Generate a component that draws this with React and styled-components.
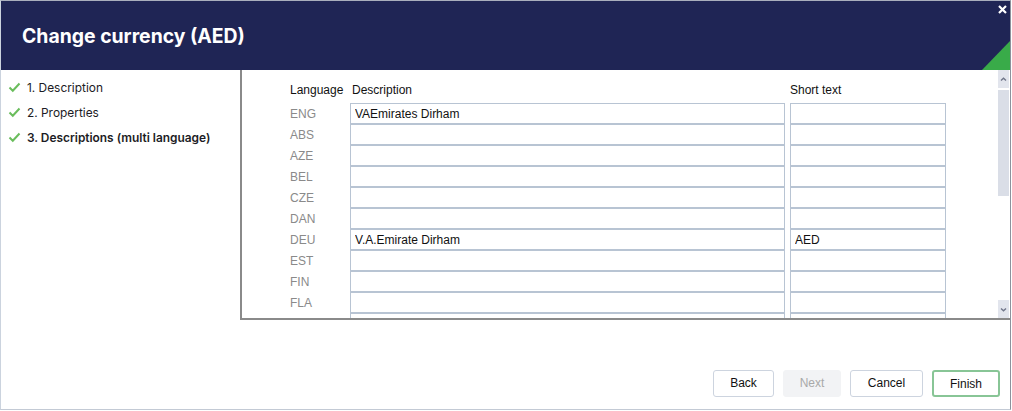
import React from 'react';
import styled, { createGlobalStyle } from 'styled-components';

const GlobalStyle = createGlobalStyle`
  html, body { margin: 0; padding: 0; background: #fff; }
  * { box-sizing: border-box; }
`;

const Window = styled.div`
  width: 1011px;
  height: 410px;
  display: flex;
  flex-direction: column;
  border-top: 1px solid #a9afbd;
  border-right: 1px solid #8c919c;
  border-left: 1px solid #cbd3de;
  border-bottom: 1px solid #c3cad5;
  background: #fff;
  font-family: "Liberation Sans", Arial, sans-serif;
`;

const Header = styled.div`
  position: relative;
  height: 69px;
  flex: none;
  display: flex;
  align-items: center;
  padding-left: 21px;
  background: #1f2555;
  overflow: hidden;
`;

const Title = styled.h1`
  margin: 0;
  color: #fff;
  font-family: Inter, "Noto Sans", sans-serif;
  font-size: 19.4px;
  font-weight: 700;
`;

const CloseButton = styled.button`
  position: absolute;
  top: 2px;
  right: 2px;
  width: 12px;
  height: 12px;
  padding: 0;
  border: none;
  background: transparent;
  display: flex;
  align-items: center;
  justify-content: center;
`;

const Corner = styled.div`
  position: absolute;
  right: 0;
  bottom: 0;
  width: 0;
  height: 0;
  border-left: 28px solid transparent;
  border-bottom: 29px solid #39ab49;
`;

const Body = styled.div`
  display: flex;
  height: 250px;
  flex: none;
`;

const Steps = styled.ul`
  width: 239px;
  flex: none;
  margin: 0;
  padding: 5px 0 0 7px;
  list-style: none;
`;

const Step = styled.li`
  display: flex;
  align-items: center;
  gap: 6px;
  height: 25px;
  font-family: Inter, "Noto Sans", sans-serif;
  font-size: 11.9px;
  font-weight: ${p => (p.$active ? 600 : 400)};
  color: #1c1c24;
`;

const Panel = styled.div`
  flex: 1;
  display: flex;
  border-left: 2px solid #8a8a8a;
  border-bottom: 2px solid #8a8a8a;
  min-width: 0;
`;

const Scroller = styled.div`
  flex: 1;
  overflow: hidden;
  padding: 10px 0 0 48px;
`;

const Grid = styled.div`
  display: grid;
  grid-template-columns: 55px 435px 156px;
  grid-template-rows: 23px;
  grid-auto-rows: 21px;
  column-gap: 5px;
  font-size: 12px;
`;

const HeadCell = styled.div`
  height: 20px;
  line-height: 20px;
  padding-left: ${p => p.$pad || 0}px;
  color: #111;
  white-space: nowrap;
`;

const LangCell = styled.div`
  display: flex;
  align-items: center;
  color: #8a8a8a;
`;

const Field = styled.input`
  width: 100%;
  height: 21px;
  margin: 0;
  padding: 0 4px;
  border: 1px solid #b8c4d3;
  border-radius: 0;
  outline: none;
  background: #fff;
  font-family: "Liberation Sans", Arial, sans-serif;
  font-size: 12px;
  color: #111;
`;

const ScrollBar = styled.div`
  width: 11px;
  flex: none;
  margin-right: 1px;
  display: flex;
  flex-direction: column;
`;

const ScrollButton = styled.div`
  height: 18px;
  flex: none;
  display: flex;
  align-items: center;
  justify-content: center;
  background: #e2e5ed;
`;

const Track = styled.div`
  flex: 1;
  padding-top: 2px;
`;

const Thumb = styled.div`
  height: 106px;
  background: #dadee7;
`;

const Footer = styled.div`
  flex: 1;
  display: flex;
  justify-content: flex-end;
  align-items: flex-end;
  gap: 9px;
  padding: 0 10px 12px 0;
`;

const Button = styled.button`
  width: ${p => p.$w}px;
  height: 27px;
  padding: 0;
  border: ${p => (p.$primary ? '2px solid #88c596' : p.$disabled ? '1px solid #f2f3f5' : '1px solid #cdd4df')};
  border-radius: 3px;
  background: ${p => (p.$disabled ? '#f2f3f5' : '#fff')};
  color: ${p => (p.$disabled ? '#a9a9a9' : '#111')};
  font-family: "Liberation Sans", Arial, sans-serif;
  font-size: 12px;
  line-height: ${p => (p.$disabled ? '21px' : '25px')};
  cursor: ${p => (p.$disabled ? 'default' : 'pointer')};
`;

const Check = () => (
  <svg width="13" height="11" viewBox="0 0 13 11">
    <polyline points="1.5,5.5 4.8,8.8 11.5,1.5" fill="none" stroke="#6abd5c" strokeWidth="2" />
  </svg>
);

const Caret = ({ down }) => (
  <svg width="7" height="5" viewBox="0 0 7 5">
    <polyline
      points={down ? '1,1.5 3.5,3.8 6,1.5' : '1,3.5 3.5,1.2 6,3.5'}
      fill="none"
      stroke="#70768a"
      strokeWidth="1.4"
    />
  </svg>
);

const rows = [
  { lang: 'ENG', desc: 'VAEmirates Dirham', short: '' },
  { lang: 'ABS', desc: '', short: '' },
  { lang: 'AZE', desc: '', short: '' },
  { lang: 'BEL', desc: '', short: '' },
  { lang: 'CZE', desc: '', short: '' },
  { lang: 'DAN', desc: '', short: '' },
  { lang: 'DEU', desc: 'V.A.Emirate Dirham', short: 'AED' },
  { lang: 'EST', desc: '', short: '' },
  { lang: 'FIN', desc: '', short: '' },
  { lang: 'FLA', desc: '', short: '' },
  { lang: '', desc: '', short: '' },
];

const steps = ['1. Description', '2. Properties', '3. Descriptions (multi language)'];

const App = () => {
  return (
    <>
      <GlobalStyle />
      <Window>
        <Header>
          <Title>Change currency (AED)</Title>
          <CloseButton>
            <svg width="9" height="9" viewBox="0 0 9 9">
              <path d="M1 1 L8 8 M8 1 L1 8" stroke="#fff" strokeWidth="2.2" />
            </svg>
          </CloseButton>
          <Corner />
        </Header>
        <Body>
          <Steps>
            {steps.map((s, i) => (
              <Step key={s} $active={i === steps.length - 1}>
                <Check />
                {s}
              </Step>
            ))}
          </Steps>
          <Panel>
            <Scroller>
              <Grid>
                <HeadCell>Language</HeadCell>
                <HeadCell $pad={2}>Description</HeadCell>
                <HeadCell>Short text</HeadCell>
                {rows.map((r, i) => (
                  <React.Fragment key={i}>
                    <LangCell>{r.lang}</LangCell>
                    <Field readOnly value={r.desc} />
                    <Field readOnly value={r.short} />
                  </React.Fragment>
                ))}
              </Grid>
            </Scroller>
            <ScrollBar>
              <ScrollButton>
                <Caret />
              </ScrollButton>
              <Track>
                <Thumb />
              </Track>
              <ScrollButton>
                <Caret down />
              </ScrollButton>
            </ScrollBar>
          </Panel>
        </Body>
        <Footer>
          <Button $w={61}>Back</Button>
          <Button $w={58} $disabled>Next</Button>
          <Button $w={73}>Cancel</Button>
          <Button $w={68} $primary>Finish</Button>
        </Footer>
      </Window>
    </>
  );
};

export default App;
